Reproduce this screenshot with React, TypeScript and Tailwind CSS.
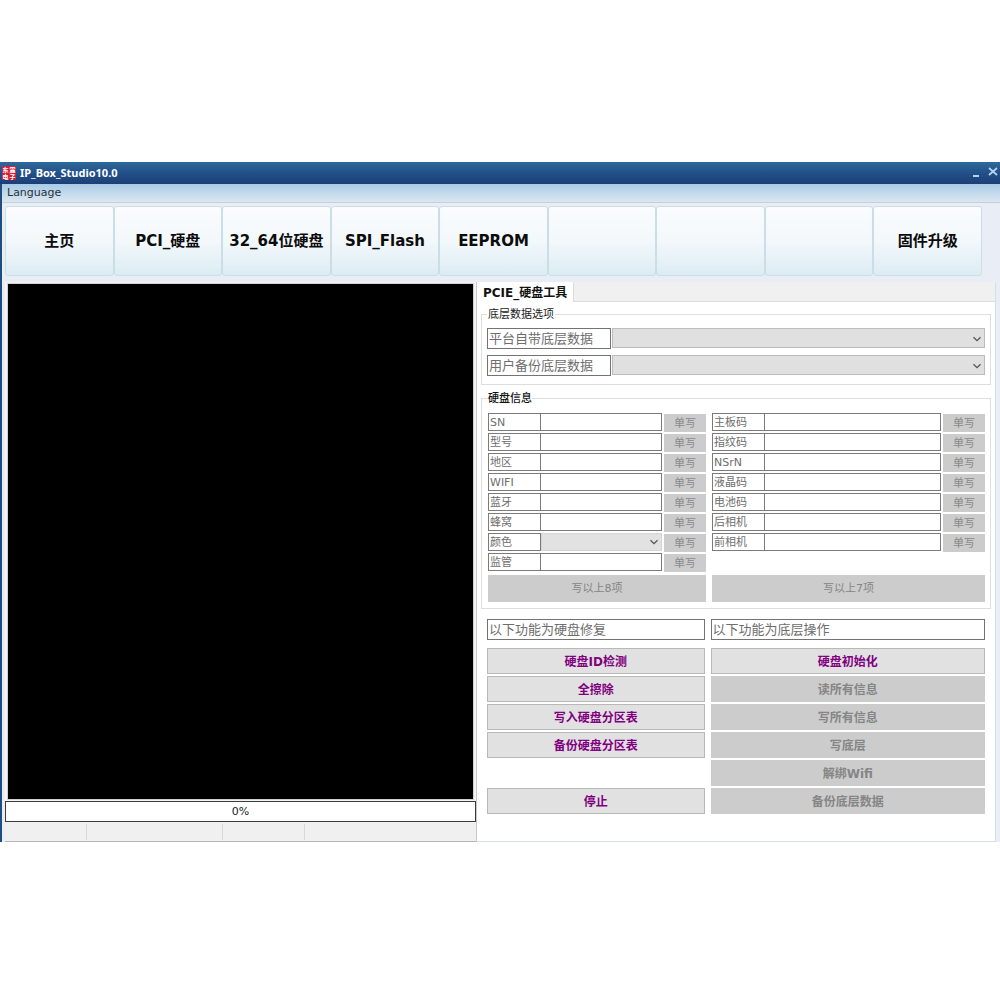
import type { ReactNode } from 'react'

type Field = { id: string; label: string; kind?: 'select' }

const TOOLS = ['主页', 'PCI_硬盘', '32_64位硬盘', 'SPI_Flash', 'EEPROM', '', '', '', '固件升级']

const LEFT_FIELDS: Field[] = [
  { id: 'sn', label: 'SN' },
  { id: 'model', label: '型号' },
  { id: 'region', label: '地区' },
  { id: 'wifi', label: 'WIFI' },
  { id: 'bluetooth', label: '蓝牙' },
  { id: 'cellular', label: '蜂窝' },
  { id: 'color', label: '颜色', kind: 'select' },
  { id: 'regulatory', label: '监管' },
]

const RIGHT_FIELDS: Field[] = [
  { id: 'board', label: '主板码' },
  { id: 'touchid', label: '指纹码' },
  { id: 'nsrn', label: 'NSrN' },
  { id: 'lcd', label: '液晶码' },
  { id: 'battery', label: '电池码' },
  { id: 'rearcam', label: '后相机' },
  { id: 'frontcam', label: '前相机' },
]

const REPAIR = ['硬盘ID检测', '全擦除', '写入硬盘分区表', '备份硬盘分区表']
const LOW_LEVEL = ['读所有信息', '写所有信息', '写底层', '解绑Wifi', '备份底层数据']

function Combo({ id, className }: { id: string; className: string }) {
  return (
    <div className="relative flex min-w-0 flex-1">
      <select id={id} className={className}>
        <option value=""></option>
      </select>
      <svg className="pointer-events-none absolute right-1 top-1/2 h-2 w-2 -translate-y-1/2" viewBox="0 0 8 8" fill="none">
        <path d="M0.5 2.2 L4 5.6 L7.5 2.2" stroke="#555" strokeWidth="1.3" />
      </svg>
    </div>
  )
}

function SourceRow({ id, label }: { id: string; label: string }) {
  return (
    <div className="flex h-[21px]">
      <label htmlFor={id} className="w-[124px] shrink-0 border border-[#737373] bg-white pl-px text-[13px] leading-[19px] text-[#6e6e6e]">
        {label}
      </label>
      <Combo id={id} className="ml-px h-5 w-full appearance-none border border-[#bcbcbc] bg-[#e0e0e0]" />
    </div>
  )
}

function FieldRow({ id, label, kind }: Field) {
  return (
    <div className="flex h-5 items-start">
      <label htmlFor={id} className="h-[18px] w-[53px] shrink-0 border border-[#7b7b7b] pl-px text-[11px] leading-[17px] text-[#6e6e6e]">
        {label}
      </label>
      {kind === 'select' ? (
        <Combo id={id} className="h-[18px] w-full appearance-none border border-[#d4d4d4] bg-[#e2e2e2]" />
      ) : (
        <input id={id} type="text" className="-ml-px h-[18px] min-w-0 flex-1 border border-[#7b7b7b] bg-white px-1 text-[11px]" />
      )}
      <button disabled aria-label={`${label} 单写`} className="ml-0.5 mt-px h-[18px] w-[42px] shrink-0 bg-[#cccccc] text-[11px] leading-5 text-[#8a8a8a]">
        单写
      </button>
    </div>
  )
}

function ActionButton({ children, disabled }: { children: ReactNode; disabled?: boolean }) {
  return (
    <button
      disabled={disabled}
      className="h-[26px] w-full border border-[#b8b8b8] bg-[#e1e1e1] pt-0.5 text-[12px] leading-[22px] font-bold text-[#800080] disabled:border-[#cccccc] disabled:bg-[#cccccc] disabled:text-[#858585]"
    >
      {children}
    </button>
  )
}

function TitleBar() {
  return (
    <header className="flex h-[22px] items-center bg-linear-to-b from-[#2f6a9c] via-[#22508a] to-[#1c3f75] pl-0.5 text-white">
      <div className="grid h-[14px] w-[14px] shrink-0 grid-cols-2 bg-[#d81e34] text-center text-[6px] leading-[7px] font-bold">
        <span>东</span>
        <span>震</span>
        <span>电</span>
        <span>子</span>
      </div>
      <h1 className="ml-1 flex-1 font-['Noto_Sans',sans-serif] text-[11px] leading-4 font-bold">IP_Box_Studio10.0</h1>
      <button aria-label="Minimize" className="mr-2 flex h-3 w-2 items-center">
        <svg viewBox="0 0 8 12" className="h-3 w-2">
          <path d="M1 9h6" stroke="#b4d3ee" strokeWidth="2" />
        </svg>
      </button>
      <button aria-label="Close" className="mr-0.5 flex h-3 w-[10px] items-center">
        <svg viewBox="0 0 10 12" className="h-3 w-[10px]">
          <path d="M1 1l8 7M9 1l-8 7" stroke="#b4d3ee" strokeWidth="1.8" />
        </svg>
      </button>
    </header>
  )
}

function OutputPane() {
  return (
    <section className="flex min-w-0 flex-col">
      <div className="mx-0.5 mt-px h-[517px] border border-[#cfcfcf] bg-black" />
      <div role="progressbar" aria-label="Progress" aria-valuenow={0} className="mt-px h-[21px] border border-[#3c3c3c] bg-white text-center text-[11px] leading-[19px] text-[#222]">
        0%
      </div>
      <div className="grid flex-1 grid-cols-[82fr_136fr_82fr_171fr] border-b border-[#b5b5b5] bg-[#f0f0f0] pt-0.5 pb-px">
        <span className="border-r border-[#d9d9d9]" />
        <span className="border-r border-[#d9d9d9]" />
        <span className="border-r border-[#d9d9d9]" />
        <span />
      </div>
    </section>
  )
}

function DiskTools() {
  return (
    <section className="flex min-w-0 flex-col border-x border-l-[#c8c8c8] border-r-[#d3e0e6]">
      <div role="tablist" className="flex h-5 border-b border-[#dcdfe0] bg-[#f0f0f0]">
        <button role="tab" aria-selected="true" className="h-5 border-r border-[#dcdcdc] bg-white px-1.5 text-[12px] leading-[22px] font-bold text-[#111]">
          PCIE_硬盘工具
        </button>
      </div>
      <div className="flex-1 border-b border-[#d9dfe2] bg-white px-1 pt-1">
        <fieldset className="border border-[#dcdfe0] px-[5px] pt-1.5 pb-2">
          <legend className="px-px pt-0.5 text-[11px] leading-[14px] text-[#222]">底层数据选项</legend>
          <div className="flex flex-col gap-1.5">
            <SourceRow id="platform-data" label="平台自带底层数据" />
            <SourceRow id="user-data" label="用户备份底层数据" />
          </div>
        </fieldset>

        <fieldset className="mt-[5px] border border-[#dcdfe0] pr-[5px] pl-1.5 pt-[7px] pb-1.5">
          <legend className="pt-0.5 text-[11px] leading-[14px] font-medium text-[#111]">硬盘信息</legend>
          <div className="grid grid-cols-[218fr_273fr] gap-x-1.5">
            <div className="min-w-0">
              {LEFT_FIELDS.map((f) => (
                <FieldRow key={f.id} {...f} />
              ))}
            </div>
            <div className="min-w-0">
              {RIGHT_FIELDS.map((f) => (
                <FieldRow key={f.id} {...f} />
              ))}
            </div>
            <button disabled className="mt-0.5 h-[27px] bg-[#cccccc] pt-0.5 text-[11px] text-[#858585]">
              写以上8项
            </button>
            <button disabled className="mt-0.5 h-[27px] bg-[#cccccc] pt-0.5 text-[11px] text-[#858585]">
              写以上7项
            </button>
          </div>
        </fieldset>

        <div className="mt-2.5 mr-1.5 ml-1.5 grid grid-cols-[218fr_275fr] gap-x-1.5 gap-y-2">
          <div className="h-[21px] border border-[#737373] pl-px text-[13px] leading-[19px] text-[#6e6e6e]">以下功能为硬盘修复</div>
          <div className="h-[21px] border border-[#737373] pl-px text-[13px] leading-[19px] text-[#6e6e6e]">以下功能为底层操作</div>
          <div className="flex flex-col gap-0.5">
            {REPAIR.map((t) => (
              <ActionButton key={t}>{t}</ActionButton>
            ))}
            <div className="mt-auto">
              <ActionButton>停止</ActionButton>
            </div>
          </div>
          <div className="flex flex-col gap-0.5">
            <ActionButton>硬盘初始化</ActionButton>
            {LOW_LEVEL.map((t) => (
              <ActionButton key={t} disabled>
                {t}
              </ActionButton>
            ))}
          </div>
        </div>
      </div>
    </section>
  )
}

export default function App() {
  return (
    <div className="flex min-h-screen flex-col justify-center bg-white pt-1 font-['DejaVu_Sans','Noto_Sans_CJK_SC',sans-serif]">
      <TitleBar />
      <div className="border-l-2 border-[#1f4d80] bg-[#e9eef6]">
        <nav className="flex h-[19px] items-center border-b border-[#c3cfd8] bg-linear-to-b from-[#a9cbe6] to-[#dbe7f1] pl-[5px]">
          <button className="text-[11px] leading-4 text-[#27323c]">Language</button>
        </nav>
        <div className="mr-[18px] ml-[3px] grid h-[79px] grid-cols-9 pt-[3px] pb-1.5">
          {TOOLS.map((t, i) => (
            <button
              key={i}
              aria-label={t || `Tool ${i + 1}`}
              className="rounded-[3px] border border-[#cbdde6] bg-linear-to-b from-[#fafcfe] via-[#f3f8fb] to-[#dcecf4] text-[15px] font-bold whitespace-nowrap text-[#0c0c0c]"
            >
              {t}
            </button>
          ))}
        </div>
        <main className="mr-1 ml-[3px] grid h-[560px] grid-cols-[471fr_520fr] bg-[#f4f4f4]">
          <OutputPane />
          <DiskTools />
        </main>
      </div>
    </div>
  )
}
